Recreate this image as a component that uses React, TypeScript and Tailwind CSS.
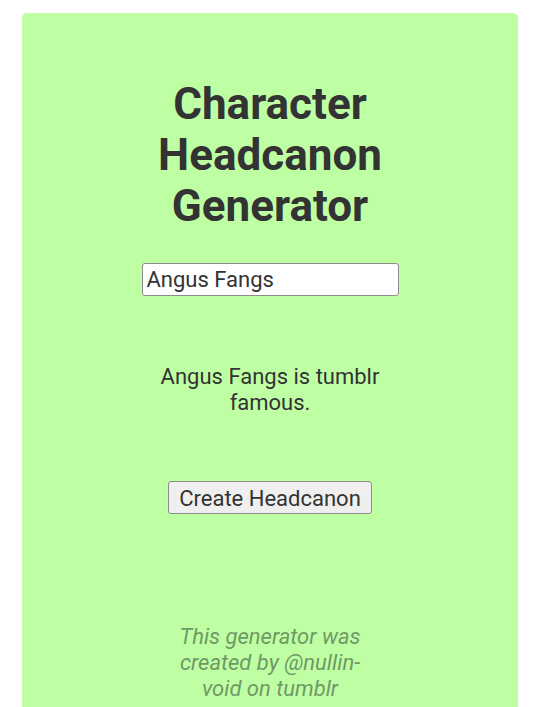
export default function App() {
  return (
    <div className="min-h-screen bg-white pt-[13px] px-[22px] font-['Roboto',sans-serif]">
      <div className="min-h-[720px] rounded-[5px] bg-[#bfffa4] flex flex-col items-center pt-[66px] text-[#333333]">
        <h1 className="w-[260px] text-center text-[44px] leading-[51px] font-bold">
          Character Headcanon Generator
        </h1>

        <input
          type="text"
          defaultValue="Angus Fangs"
          className="mt-[31px] w-[257px] h-[33px] px-[4px] bg-white border border-[#8d8d8d] rounded-[3px] text-[22px] text-[#333333] outline-none"
        />

        <p className="mt-[68px] w-[260px] text-center text-[22px] leading-[26px]">
          Angus Fangs is tumblr famous.
        </p>

        <button className="mt-[65px] h-[33px] px-[10px] bg-[#efefef] border border-[#8d8d8d] rounded-[3px] text-[22px] text-[#333333]">
          Create Headcanon
        </button>

        <p className="mt-[110px] w-[195px] text-center text-[22px] leading-[26px] italic text-[#6f9965]">
          This generator was created by @nullin-void on tumblr
        </p>
      </div>
    </div>
  );
}
